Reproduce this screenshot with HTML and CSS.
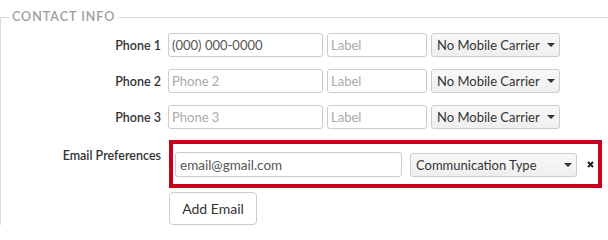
FILE: index.html
```html
<!DOCTYPE html>
<html lang="en">
<head>
<meta charset="utf-8">
<title>Contact Info</title>
<link rel="stylesheet" href="styles.css">
</head>
<body>
<fieldset class="section">
  <legend class="section-title">Contact Info</legend>
  <div class="phones">
    <div class="row">
      <label class="row-label">Phone 1</label>
      <input class="field field-phone" type="text" value="(000) 000-0000">
      <input class="field field-label" type="text" placeholder="Label">
      <div class="select select-carrier"><span>No Mobile Carrier</span><svg class="caret" width="8" height="4" viewBox="0 0 8 4"><path d="M0 0H8L4 4Z"/></svg></div>
    </div>
    <div class="row">
      <label class="row-label">Phone 2</label>
      <input class="field field-phone" type="text" placeholder="Phone 2">
      <input class="field field-label" type="text" placeholder="Label">
      <div class="select select-carrier"><span>No Mobile Carrier</span><svg class="caret" width="8" height="4" viewBox="0 0 8 4"><path d="M0 0H8L4 4Z"/></svg></div>
    </div>
    <div class="row">
      <label class="row-label">Phone 3</label>
      <input class="field field-phone" type="text" placeholder="Phone 3">
      <input class="field field-label" type="text" placeholder="Label">
      <div class="select select-carrier"><span>No Mobile Carrier</span><svg class="caret" width="8" height="4" viewBox="0 0 8 4"><path d="M0 0H8L4 4Z"/></svg></div>
    </div>
  </div>
  <div class="email-row">
    <label class="row-label email-label">Email Preferences</label>
    <div class="email-col">
      <div class="email-box">
        <input class="field field-email" type="text" value="email@gmail.com">
        <div class="select select-type"><span>Communication Type</span><svg class="caret" width="8" height="4" viewBox="0 0 8 4"><path d="M0 0H8L4 4Z"/></svg></div>
        <svg class="remove" width="7" height="7" viewBox="0 0 7 7"><path d="M1 1L6 6M6 1L1 6"/></svg>
      </div>
      <button class="btn" type="button">Add Email</button>
    </div>
  </div>
</fieldset>
</body>
</html>
```

FILE: styles.css
```css
html, body {
  margin: 0;
  padding: 0;
  background: #fff;
}
body {
  font-family: Lato, "Open Sans", sans-serif;
  color: #333;
  width: 608px;
  height: 231px;
  overflow: hidden;
}
.section {
  margin: 9px 0 0 0;
  padding: 8px 0 0 0;
  border: 1px solid #dcdcdc;
  border-right: none;
  border-bottom: none;
  min-width: 0;
}
.section-title {
  margin-left: 9px;
  padding: 0 3px 0 2px;
  font-size: 12.5px;
  line-height: 16px;
  font-weight: 600;
  letter-spacing: 1px;
  text-transform: uppercase;
  color: #9a9ea3;
}
.phones {
  display: flex;
  flex-direction: column;
  gap: 12px;
  margin-bottom: 11px;
}
.row {
  display: flex;
  align-items: center;
}
.row-label {
  width: 160px;
  margin-right: 7px;
  text-align: right;
  font-size: 12.5px;
  font-weight: 600;
  color: #333;
  white-space: nowrap;
}
.field {
  box-sizing: border-box;
  height: 24px;
  border: 1px solid #ccc;
  border-radius: 3px;
  padding: 0 3px;
  font-family: Lato, "Open Sans", sans-serif;
  font-size: 13px;
  color: #555;
  background: #fff;
  margin: 0;
  outline: none;
}
.field::placeholder {
  color: #aaa;
}
.field-phone {
  width: 155px;
}
.field-label {
  width: 100px;
  margin-left: 4px;
}
.select {
  box-sizing: border-box;
  height: 24px;
  display: flex;
  align-items: center;
  justify-content: space-between;
  border: 1px solid #ccc;
  border-radius: 3px;
  background: linear-gradient(#f8f8f8, #efefef);
  font-size: 13px;
  color: #333;
  padding: 0 4px 0 5px;
  white-space: nowrap;
}
.select-carrier {
  width: 129px;
  margin-left: 4px;
}
.caret {
  fill: #333;
  flex: none;
}
.email-row {
  display: flex;
  align-items: flex-start;
}
.email-label {
  line-height: 20px;
  padding-top: 6px;
}
.email-col {
  display: flex;
  flex-direction: column;
  align-items: flex-start;
  margin-left: 1px;
}
.email-box {
  box-sizing: border-box;
  width: 433px;
  display: flex;
  align-items: center;
  border: 4px solid #c8001e;
  padding: 8px 0 7px 2px;
}
.field-email {
  width: 227px;
  height: 25px;
  font-size: 13.5px;
  padding: 0 4px;
}
.select-type {
  width: 167px;
  margin-left: 8px;
}
.remove {
  margin-left: 10px;
  stroke: #222;
  stroke-width: 2;
  flex: none;
}
.btn {
  margin-top: 4px;
  box-sizing: border-box;
  width: 88px;
  height: 33px;
  border: 1px solid #ccc;
  border-radius: 4px;
  background: #fff;
  font-family: Lato, "Open Sans", sans-serif;
  font-size: 14px;
  color: #333;
  padding: 0;
}
```
